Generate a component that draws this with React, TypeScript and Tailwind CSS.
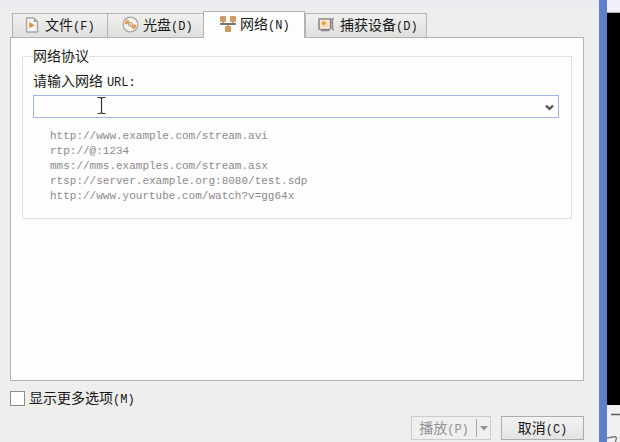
import React, { useState } from "react";

const MONO = "font-['Liberation_Mono','Noto_Sans_CJK_SC',monospace]";

function Caption({ text, accel }: { text: string; accel: string }) {
  return (
    <span className="whitespace-nowrap">
      {text}
      <span className={`${MONO} text-xs leading-none`}>({accel})</span>
    </span>
  );
}

function FileIcon() {
  return (
    <svg width="14" height="16" viewBox="0 0 14 16" aria-hidden="true">
      <path d="M1.500 1H9l3.500 3.500V15H1.500z" fill="#f8f5f3" stroke="#a9a5a6" strokeWidth="1.400" strokeLinejoin="round" />
      <path d="M8.600 1v4h4z" fill="#a9a5a6" />
      <path d="M4.200 5v6.600l5.400-3.300z" fill="#e8913a" />
    </svg>
  );
}

function DiscIcon() {
  return (
    <svg width="17" height="17" viewBox="0 0 17 17" aria-hidden="true">
      <circle cx="8.500" cy="8.500" r="7.400" fill="#f7f1ed" stroke="#aaa4a4" strokeWidth="1.200" />
      <path d="M8.500 8.500 2.500 8A6 6 0 0 1 6 3.200z" fill="#e3a158" />
      <path d="M8.500 8.500l6 .2A6 6 0 0 1 11 13.800z" fill="#e3a158" />
      <circle cx="8.500" cy="8.500" r="2" fill="#f9f6f3" stroke="#b98d5e" strokeWidth="0.900" />
      <circle cx="8.500" cy="8.500" r="0.700" fill="#8f8079" />
    </svg>
  );
}

function NetworkIcon() {
  return (
    <svg width="16" height="16" viewBox="0 0 16 16" aria-hidden="true">
      <path d="M3 5v3M13 5v3M8 8v3" stroke="#8d7d76" strokeWidth="1.400" />
      <path d="M0 8h16" stroke="#7d7573" strokeWidth="2" />
      <g fill="#cf9b62">
        <rect x="0" y="0" width="6" height="6" rx="1" />
        <rect x="10" y="0" width="6" height="6" rx="1" />
        <rect x="5" y="10" width="6" height="6" rx="1" />
      </g>
    </svg>
  );
}

function CaptureIcon() {
  return (
    <svg width="16" height="16" viewBox="0 0 16 16" aria-hidden="true">
      <path d="M1 2h11.500v9.500l-1 1H2l-1-1z" fill="#fdf3e4" stroke="#8e8587" strokeWidth="1.600" strokeLinejoin="round" />
      <rect x="3" y="3.600" width="7.600" height="6.800" fill="#fbdcb2" />
      <circle cx="5.800" cy="6.200" r="1.900" fill="#e8973d" />
      <path d="M15.500 1l-1 1.500h-1.500M14.500 2.500v9l1 1.500M12.500 6h2M12.500 9.500h2M3 13.500h8" fill="none" stroke="#8e8587" strokeWidth="1.400" />
    </svg>
  );
}

const TABS = [
  { id: "file", text: "文件", accel: "F", icon: <FileIcon />, width: "w-24 pl-3 gap-1.5" },
  { id: "disc", text: "光盘", accel: "D", icon: <DiscIcon />, width: "w-[97px] pl-3.5 gap-1" },
  { id: "network", text: "网络", accel: "N", icon: <NetworkIcon />, width: "w-[102px] pl-4 gap-1" },
  { id: "capture", text: "捕获设备", accel: "D", icon: <CaptureIcon />, width: "w-[122px] pl-3 gap-1.5" },
];

const EXAMPLES = [
  "http://www.example.com/stream.avi",
  "rtp://@:1234",
  "mms://mms.examples.com/stream.asx",
  "rtsp://server.example.org:8080/test.sdp",
  "http://www.yourtube.com/watch?v=gg64x",
];

export default function App() {
  const [active, setActive] = useState("network");

  return (
    <div className="flex min-h-screen overflow-hidden bg-[#eeeeed] font-['Liberation_Sans','Noto_Sans_CJK_SC',sans-serif] text-sm leading-5 text-[#181818]">
      <main className="flex min-w-0 flex-1 flex-col bg-linear-to-b from-[#ebeaf2] to-[#eeeeed] to-[12px] pt-[11px] pr-[15px] pb-0.5 pl-2.5">
        <div role="tablist" className="flex h-[26px] items-end pl-0.5">
          {TABS.map((tab) => (
            <button
              key={tab.id}
              role="tab"
              aria-selected={tab.id === active}
              onClick={() => setActive(tab.id)}
              className={`flex items-center border border-b-0 border-[#b3b3b3] pb-0.5 ${tab.width} ${
                tab.id === active
                  ? "z-10 -mb-px h-[27px] bg-[#fdfdfc]"
                  : "-mr-px h-6 bg-linear-to-b from-[#f0f0ef] to-[#dfdfde]"
              }`}
            >
              {tab.icon}
              <Caption text={tab.text} accel={tab.accel} />
            </button>
          ))}
        </div>

        <section className="flex-1 border border-[#b3b3b3] bg-[#fdfdfc] px-[11px] pt-2">
          <fieldset className="border border-[#e0e0e0] pr-3 pb-3.5 pl-2.5">
            <legend>网络协议</legend>
            <label htmlFor="url" className="block pt-[5px]">
              请输入网络 <span className={`${MONO} text-xs`}>URL:</span>
            </label>
            <div className="relative mt-1 flex h-[23px] border border-[#9bb8e3] bg-[#fefefe]">
              <input
                id="url"
                type="text"
                className={`${MONO} min-w-0 flex-1 bg-transparent px-1 text-xs outline-none`}
              />
              <button aria-label="展开" className="flex w-[18px] items-center justify-center pt-0.5">
                <svg width="9" height="7" viewBox="0 0 9 7" aria-hidden="true">
                  <path d="M1 1.500 4.500 5 8 1.500" fill="none" stroke="#505050" strokeWidth="2.200" />
                </svg>
              </button>
              <svg className="pointer-events-none absolute top-0 left-[63px]" width="9" height="19" viewBox="0 0 9 19" aria-hidden="true">
                <path d="M.5 1.500h3l1 1 1-1h3M4.500 2.500v14M.5 17.500h3l1-1 1 1h3" fill="none" stroke="#333" strokeWidth="1.200" />
              </svg>
            </div>
            <ul className={`${MONO} mt-[11px] pl-[17px] text-[11px] leading-[15px] text-[#8d898e]`}>
              {EXAMPLES.map((url) => (
                <li key={url}>{url}</li>
              ))}
            </ul>
          </fieldset>
        </section>

        <label className="mt-[7px] flex items-center gap-1 self-start">
          <input
            type="checkbox"
            className="size-[15px] appearance-none border border-[#8d8d8d] bg-[#fdfdfd] checked:bg-[#5b80cc]"
          />
          <Caption text="显示更多选项" accel="M" />
        </label>

        <footer className="mt-2 flex h-6 justify-end gap-2.5">
          <div className="flex w-20 border border-[#cdcdcd] bg-[#efefee] text-[#929292]">
            <button disabled className="flex flex-1 items-center justify-center">
              <Caption text="播放" accel="P" />
            </button>
            <button disabled aria-label="更多播放方式" className="my-0.5 flex w-3.5 items-center justify-center border-l border-[#a8a8a8]">
              <svg width="8" height="5" viewBox="0 0 8 5" aria-hidden="true">
                <path d="M0 0h8L4 4.500z" fill="#929292" />
              </svg>
            </button>
          </div>
          <button className="flex w-[83px] items-center justify-center border border-[#acacac] bg-linear-to-b from-[#f3f3f3] to-[#e3e3e2]">
            <Caption text="取消" accel="C" />
          </button>
        </footer>
      </main>

      <aside className="flex w-[21px] shrink-0 flex-col border-l-8 border-[#5b80cc] bg-[#f0f0f3]">
        <div className="h-[13px] border-b border-[#b0b0b6] bg-[#f1f0f8]" />
        <div className="flex-1 bg-black" />
        <svg className="block" width="13" height="37" viewBox="0 0 13 37" aria-hidden="true">
          <path d="M4 9.500h9" stroke="#5c5c5c" strokeWidth="1.500" />
          <path d="M0 33l8-1.500 1.500 1.500-1 4" fill="none" stroke="#777" strokeWidth="1.300" />
        </svg>
      </aside>
    </div>
  );
}
